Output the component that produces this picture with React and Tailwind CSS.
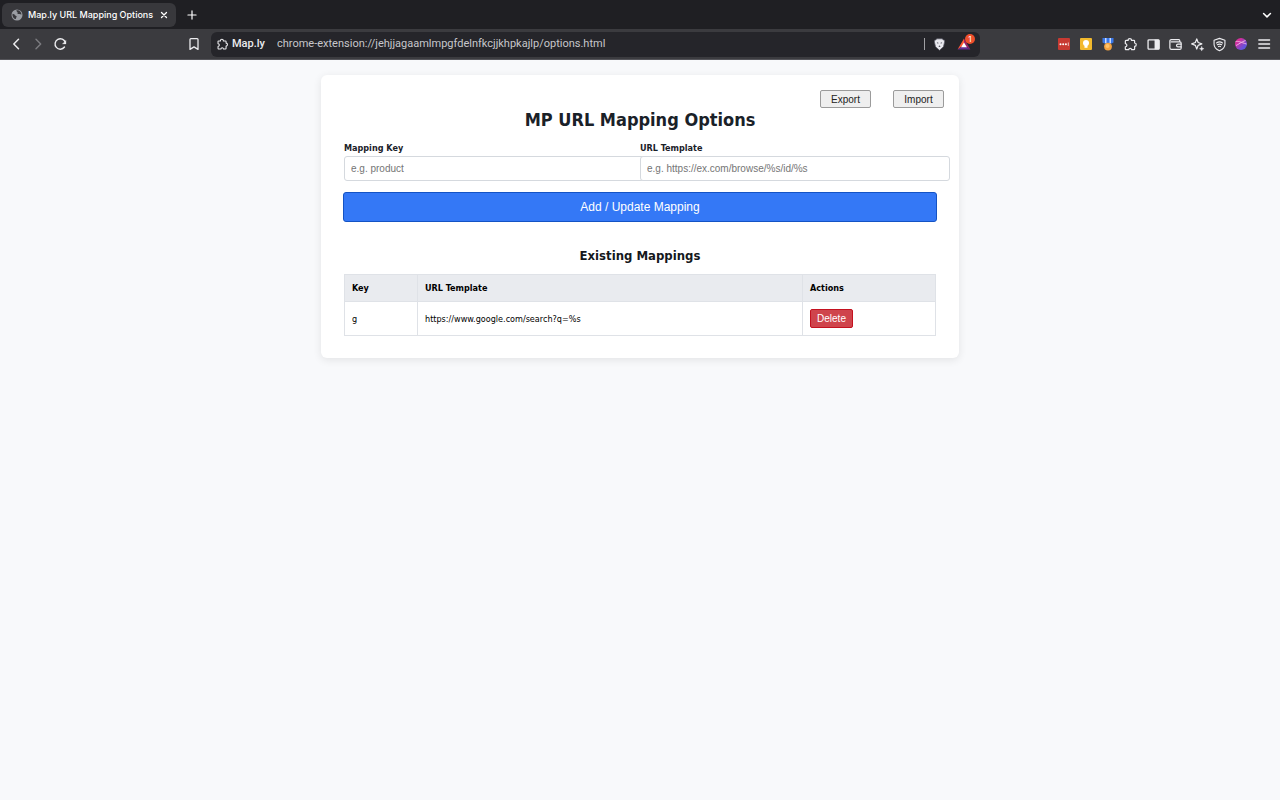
import React from "react";

const stroke = {
  fill: "none",
  stroke: "currentColor",
  strokeLinecap: "round",
  strokeLinejoin: "round",
};

function Icon({ children, width = 1.4, className = "size-4" }) {
  return (
    <svg viewBox="0 0 16 16" className={className} strokeWidth={width} {...stroke} aria-hidden="true">
      {children}
    </svg>
  );
}

function Puzzle({ className }) {
  return (
    <Icon className={className} width={1.3}>
      <path d="M3.2 3.6h2.3c-.3-2.6 3.8-2.6 3.5 0h2.6c.5 0 .8.3.8.8v1.9c2.3.1 2.3 3.6 0 3.7v2.7c0 .5-.3.8-.8.8H9.2c-.1-1.9-3-1.9-3.1 0H3.3c-.5 0-.8-.3-.8-.8v-2.3c2.2-.2 2.2-3.2 0-3.4V4.4c0-.5.3-.8.7-.8z" />
    </Icon>
  );
}

function BarButton({ label, children, className = "" }) {
  return (
    <button type="button" aria-label={label} className={`flex h-6 w-[22px] shrink-0 items-center justify-center ${className}`}>
      {children}
    </button>
  );
}

function TabStrip() {
  return (
    <div className="flex h-[29px] items-center bg-[#1f1f23] pr-[5px] pl-[2px] text-white">
      <div className="flex h-6 w-[174px] items-center rounded-md bg-[#38383c] pr-[6px] pl-[9px]">
        <svg viewBox="0 0 12 12" className="size-3 shrink-0" aria-hidden="true">
          <circle cx="6" cy="6" r="5.5" fill="#9a9da3" />
          <path d="M1.5 4.8c1.2.2 2 .6 2.5 1.4.3.6 1.3.4 1.6 1 .3.8-.6 1.2-.6 2 0 .7-.5 1-1 .8C2.3 9.2 1.2 7.3 1.5 4.8zM5.3 1.500c1.500-.5 3.300.1 4.300 1.400.5.7.8 1.600.9 2.500-.9.2-1.300-.6-2.200-.5-.7.1-1.500.3-1.900-.3-.3-.5.4-.8.2-1.300-.2-.6-1.400-.9-1.300-1.800z" fill="#38383c" />
        </svg>
        <span className="ml-[5px] flex-1 text-[9px] leading-3 font-medium whitespace-nowrap">Map.ly URL Mapping Options</span>
        <button type="button" aria-label="Close tab" className="flex size-3 items-center justify-center">
          <Icon className="size-2" width={2.6}><path d="M3 3l10 10M13 3L3 13" /></Icon>
        </button>
      </div>
      <button type="button" aria-label="New tab" className="ml-[9px] flex size-[14px] items-center justify-center">
        <Icon className="size-[10px]" width={1.9}><path d="M8 1.500v13M1.500 8h13" /></Icon>
      </button>
      <button type="button" aria-label="Search tabs" className="ml-auto flex size-4 items-center justify-center">
        <Icon className="size-[10px]" width={2.4}><path d="M2.500 5.500L8 11l5.500-5.500" /></Icon>
      </button>
    </div>
  );
}

function AddressBar() {
  return (
    <div className="flex h-[25px] w-[769px] min-w-0 items-center rounded-md bg-[#25252a] pr-[5px] pl-[5px]">
      <Puzzle className="size-[13px] shrink-0" />
      <label htmlFor="address" className="ml-[3px] w-8 font-[Roboto,sans-serif] text-[11px] leading-4 font-medium">Map.ly</label>
      <input
        id="address"
        type="text"
        defaultValue="chrome-extension://jehjjagaamlmpgfdelnfkcjjkhpkajlp/options.html"
        className="ml-[13px] min-w-0 flex-1 bg-transparent font-[Roboto,sans-serif] text-[11px] leading-4 text-[#c7c7cb] outline-none"
      />
      <span className="h-3 w-px bg-[#a0a0a4]" />
      <button type="button" aria-label="Shields" className="ml-[8px] flex w-3 justify-center">
        <svg viewBox="0 0 12 14" className="h-[13px] w-[11px]" aria-hidden="true">
          <path d="M3 .8h6l1.300 1.400 1-.1.300 2L10.300 9.500 6 13.400 1.700 9.500.4 4.100l.4-2 1 .1z" fill="#e8e8ee" stroke="#565663" strokeWidth=".8" />
          <path d="M3 4.500l1.800.7-.4 1.200zM9 4.500l-1.800.7.4 1.200zM4.800 8.800L6 8.200l1.200.6L6 9.800z" fill="#383845" />
        </svg>
      </button>
      <button type="button" aria-label="Rewards" className="relative ml-[12px] flex size-[18px] items-center">
        <svg viewBox="0 0 16 14" className="h-[12px] w-[14px]" aria-hidden="true">
          <path d="M8 .5L.5 13.300l7.500-5z" fill="#ff5a33" />
          <path d="M8 .5l7.500 12.800L8 8.300z" fill="#9e1f63" />
          <path d="M.5 13.300h15L8 8.300z" fill="#662d91" />
          <path d="M8 5.300l3.400 5.500H4.600z" fill="#fff" />
        </svg>
        <span className="absolute -top-px right-0 flex size-[10px] items-center justify-center rounded-full bg-[#ee4f2c] text-[8px] leading-none text-white">1</span>
      </button>
    </div>
  );
}

function Toolbar() {
  return (
    <div className="flex h-[31px] items-center border-b border-[#55555a] bg-[#3b3b3f] pr-[5px] pl-[5px] text-[#ececef]">
      <BarButton label="Back"><Icon width={1.5}><path d="M10.500 3.300L5.800 8l4.700 4.700" /></Icon></BarButton>
      <BarButton label="Forward" className="text-[#7c7c81]"><Icon width={1.400}><path d="M6 3.300L10.700 8 6 12.700" /></Icon></BarButton>
      <BarButton label="Reload">
        <Icon width={1.400}>
          <path d="M12.500 11A5.200 5.200 0 1 1 13.300 6.700" />
          <path d="M14 4.500v3.400h-3.400z" fill="currentColor" strokeWidth=".3" />
        </Icon>
      </BarButton>
      <BarButton label="Bookmark" className="ml-[112px]">
        <Icon width={1.300}><path d="M4 3.500c0-.5.400-.9.900-.9h6.200c.5 0 .9.400.9.900v9.900l-4-2.500-4 2.500z" /></Icon>
      </BarButton>
      <div className="ml-[6px] flex min-w-0"><AddressBar /></div>
      <div className="ml-auto flex items-center">
        <BarButton label="Password manager">
          <svg viewBox="0 0 12 12" className="size-3" aria-hidden="true">
            <rect width="12" height="12" rx="1" fill="#c83a32" />
            <circle cx="2.500" cy="6.200" r="1" fill="#fff" /><circle cx="5.200" cy="6.200" r="1" fill="#fff" /><circle cx="7.900" cy="6.200" r="1" fill="#fff" />
            <path d="M10.300 4.500v3.400" stroke="#fff" strokeWidth=".7" />
          </svg>
        </BarButton>
        <BarButton label="Notes">
          <svg viewBox="0 0 12 12" className="size-3" aria-hidden="true">
            <rect width="12" height="12" rx="1" fill="#f2b92d" />
            <circle cx="6" cy="5" r="3" fill="#fff" /><path d="M4.500 7h3v2.800h-3z" fill="#fff" />
          </svg>
        </BarButton>
        <BarButton label="Medal">
          <svg viewBox="0 0 14 14" className="size-[14px]" aria-hidden="true">
            <path d="M1.500 1h11v4.500L8.500 7.500h-3l-4-2z" fill="#3977e8" />
            <path d="M4 1h1.500v5H4zM8.500 1H10v5H8.500z" fill="#c9dbff" />
            <circle cx="7" cy="9.600" r="3.900" fill="#f4a340" /><circle cx="6.500" cy="9" r="2" fill="#ffc36a" />
          </svg>
        </BarButton>
        <BarButton label="Extensions"><Puzzle className="size-[15px]" /></BarButton>
        <BarButton label="Side panel" className="ml-px">
          <Icon className="size-[15px]"><rect x="2.200" y="3" width="11.800" height="10" rx="1" /><path d="M9.500 3H14v10H9.500z" fill="currentColor" strokeWidth=".4" /></Icon>
        </BarButton>
        <BarButton label="Wallet">
          <Icon className="size-[15px]" width={1.300}><path d="M12.500 5.200V3.800c0-.6-.4-1-1-1H3.500c-.8 0-1.500.6-1.500 1.400v7.300c0 1 .6 1.700 1.600 1.700h9c.8 0 1.400-.5 1.400-1.300V6.500c0-.8-.6-1.300-1.400-1.300H3.500" /><path d="M14 7.600h-3.400a1.500 1.500 0 0 0 0 3H14" /></Icon>
        </BarButton>
        <BarButton label="Assistant">
          <Icon className="size-[15px]" width={1.300}><path d="M7.200 2l1.500 3.900 3.900 1.500-3.900 1.500-1.500 3.900-1.500-3.900-3.900-1.500 3.900-1.500z" /><path d="M12.500 10l.7 1.800 1.800.7-1.800.7-.7 1.800-.7-1.800-1.800-.7 1.800-.7z" fill="currentColor" strokeWidth=".3" /></Icon>
        </BarButton>
        <BarButton label="VPN">
          <Icon className="size-[15px]" width={1.200}><path d="M8 1.500l5.800 2v4.200c0 3.300-2.300 5.500-5.800 7-3.500-1.500-5.800-3.700-5.800-7V3.500z" /><path d="M4.800 6.300c2-1.300 4.400-1.300 6.400 0M5.700 8.300c1.500-.9 3.100-.9 4.600 0M7 10.200c.7-.4 1.300-.4 2 0" /></Icon>
        </BarButton>
        <BarButton label="Profile">
          <svg viewBox="0 0 12 12" className="size-3" aria-hidden="true">
            <defs><linearGradient id="avatar" x1="0" y1="0" x2="1" y2="1"><stop offset=".25" stopColor="#d62d9b" /><stop offset=".75" stopColor="#6552dc" /></linearGradient></defs>
            <circle cx="6" cy="6" r="6" fill="url(#avatar)" />
            <path d="M.5 3.800C3 2.500 6 4.500 11.500 6M1 7.500c2.500-1 5-3.500 9.500-5" fill="none" stroke="#f6b7e4" strokeWidth=".9" />
          </svg>
        </BarButton>
        <BarButton label="Menu" className="ml-px"><Icon width={1.300}><path d="M2.800 4h10.800M2.800 8h10.800M2.800 12h10.800" /></Icon></BarButton>
      </div>
    </div>
  );
}

const plainButton =
  "h-[18px] w-[51px] rounded-[2px] border border-[#9b9b9b] bg-[#efefef] pt-[2px] font-['Liberation_Sans',sans-serif] text-[10px] leading-[14px] text-[#222]";
const field =
  "box-content h-[23px] w-full rounded-[3px] border border-[#d5d9de] bg-white px-[6px] font-['Liberation_Sans',sans-serif] text-[10px] text-[#333] placeholder:text-[#757575]";
const cell = "border border-[#dfe2e7] px-[7px] text-left";

const mappings = [{ key: "g", url: "https://www.google.com/search?q=%s" }];

function OptionsCard() {
  return (
    <main className="mx-auto mt-[15px] max-w-[638px] rounded-md bg-white px-[22px] pt-[15px] pb-[22px] font-['DejaVu_Sans_Condensed','DejaVu_Sans',sans-serif] shadow-[0_2px_9px_rgba(0,0,0,0.09)]">
      <div className="-mr-[7px] flex justify-end gap-[22px]">
        <button type="button" className={plainButton}>Export</button>
        <button type="button" className={plainButton}>Import</button>
      </div>
      <h1 className="text-center text-[18px] leading-6 font-bold text-[#1a2128]">MP URL Mapping Options</h1>
      <form onSubmit={(e) => e.preventDefault()}>
        <div className="mt-[9px] grid grid-cols-2 px-px">
          <div>
            <label htmlFor="key" className="block text-[9px] leading-[14px] font-bold text-[#1a2128]">Mapping Key</label>
            <input id="key" type="text" placeholder="e.g. product" className={`mt-px ${field}`} />
          </div>
          <div>
            <label htmlFor="url" className="block text-[9px] leading-[14px] font-bold text-[#1a2128]">URL Template</label>
            <input id="url" type="text" placeholder="e.g. https://ex.com/browse/%s/id/%s" className={`mt-px ${field}`} />
          </div>
        </div>
        <button type="submit" className="mt-[11px] h-[30px] w-full rounded-[3px] border border-[#1453c4] bg-[#3478f6] font-['Liberation_Sans',sans-serif] text-[12px] text-white">
          Add / Update Mapping
        </button>
      </form>
      <h2 className="mt-6 text-center text-[13px] leading-5 font-bold text-[#15181c]">Existing Mappings</h2>
      <div className="mt-2 px-px">
        <table className="w-full table-fixed border-collapse text-[9px] leading-3 text-black">
          <colgroup>
            <col className="w-[73px]" />
            <col />
            <col className="w-[133px]" />
          </colgroup>
          <thead>
            <tr className="h-[27px] bg-[#e9ebef]">
              <th className={cell}>Key</th>
              <th className={cell}>URL Template</th>
              <th className={cell}>Actions</th>
            </tr>
          </thead>
          <tbody>
            {mappings.map((m) => (
              <tr key={m.key} className="h-[34px]">
                <td className={cell}>{m.key}</td>
                <td className={cell}>{m.url}</td>
                <td className={cell}>
                  <button type="button" className="block h-[19px] w-[43px] rounded-[2px] border border-[#c4111f] bg-[#cf444c] font-['Liberation_Sans',sans-serif] text-[10px] text-white">Delete</button>
                </td>
              </tr>
            ))}
          </tbody>
        </table>
      </div>
    </main>
  );
}

export default function App() {
  return (
    <div className="flex min-h-screen flex-col bg-[#f8f9fb]">
      <header className="font-[Inter,sans-serif]">
        <TabStrip />
        <Toolbar />
      </header>
      <div className="flex-1 px-4 pb-4">
        <OptionsCard />
      </div>
    </div>
  );
}
